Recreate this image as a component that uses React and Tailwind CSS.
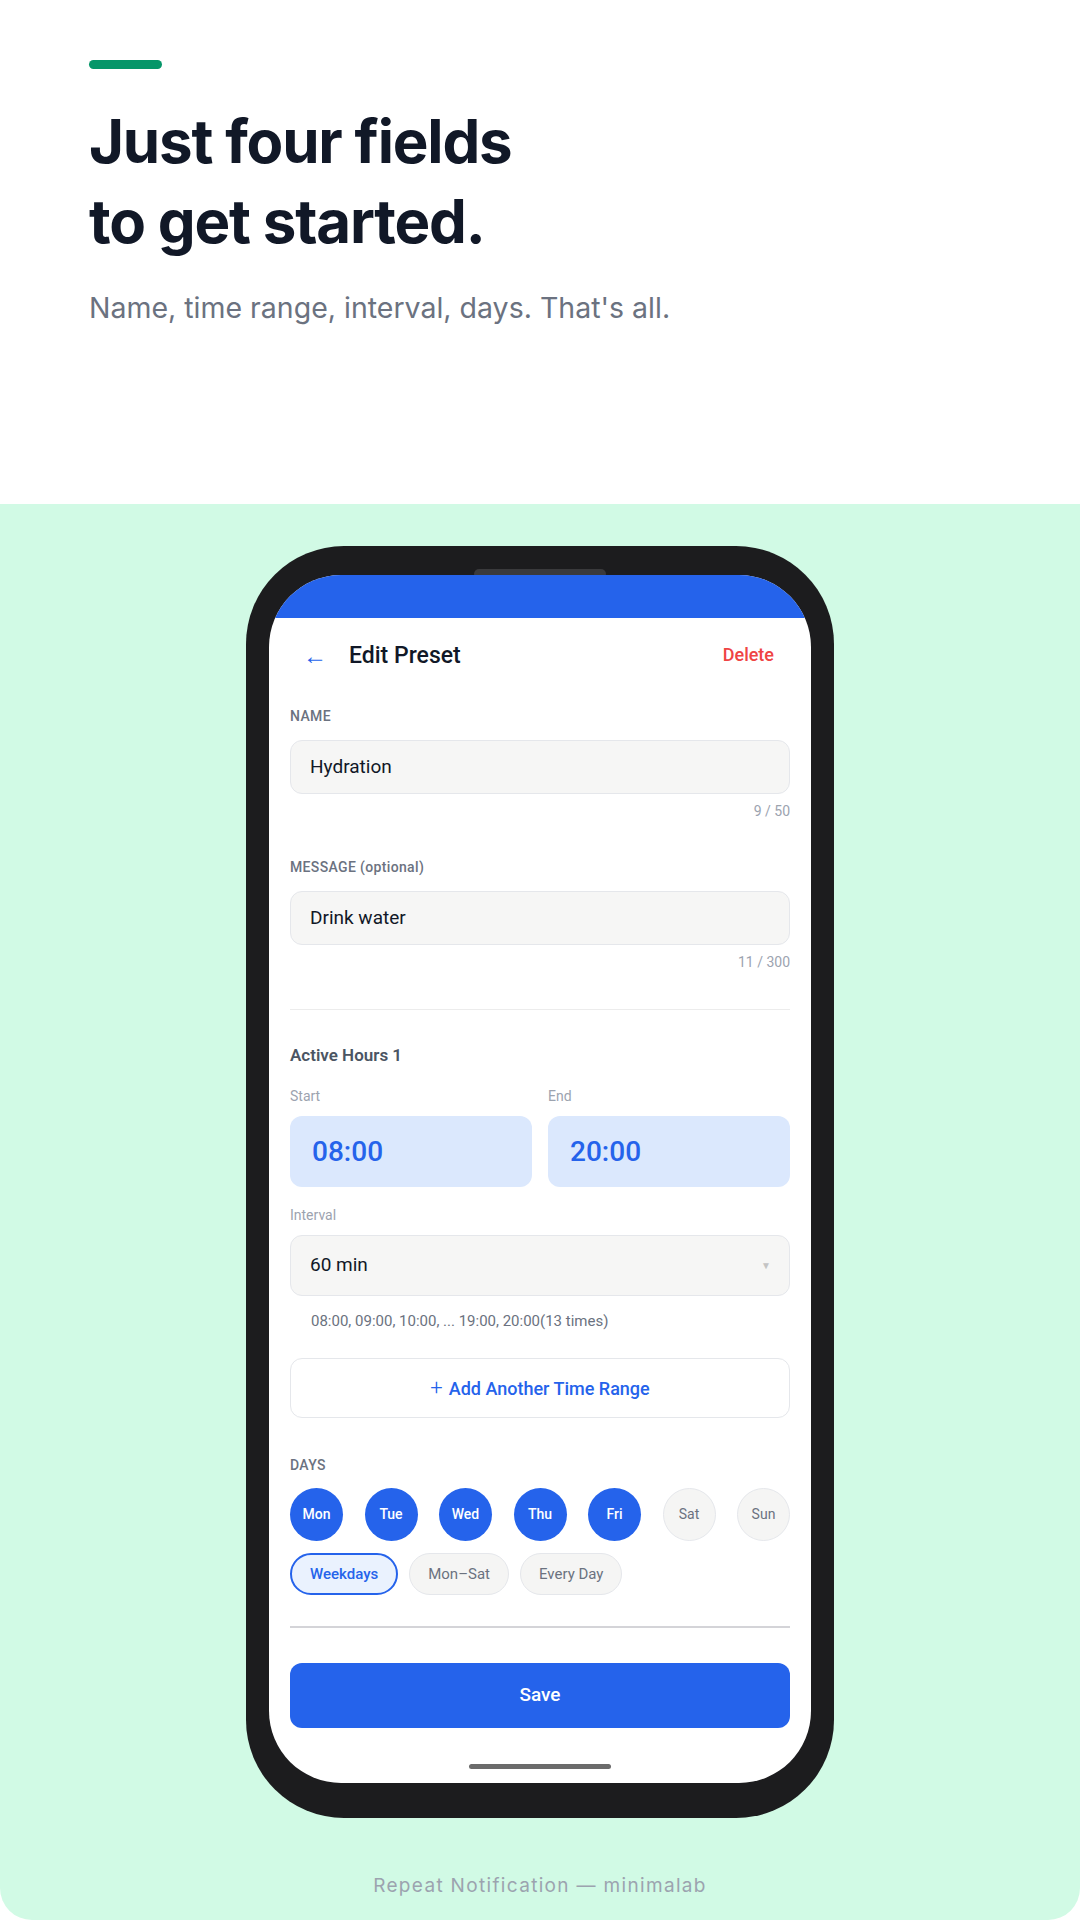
import React from 'react';

const days = [
  { label: 'Mon', on: true },
  { label: 'Tue', on: true },
  { label: 'Wed', on: true },
  { label: 'Thu', on: true },
  { label: 'Fri', on: true },
  { label: 'Sat', on: false },
  { label: 'Sun', on: false },
];

const presets = [
  { label: 'Weekdays', on: true },
  { label: 'Mon–Sat', on: false },
  { label: 'Every Day', on: false },
];

const Label = ({ children, className = '' }) => (
  <div className={`text-[14px] leading-[20px] font-medium tracking-wide text-[#6b7280] ${className}`}>
    {children}
  </div>
);

const Counter = ({ children, className = '' }) => (
  <div className={`text-right text-[14px] leading-[18px] text-[#9ca3af] ${className}`}>{children}</div>
);

const TextField = ({ value, className = '' }) => (
  <div
    className={`h-[54px] rounded-[12px] border border-[#e5e7eb] bg-[#f6f6f5] flex items-center px-[19px] text-[19px] text-[#111827] ${className}`}
  >
    {value}
  </div>
);

const PhoneScreen = () => (
  <div className="h-full bg-white rounded-[72px] overflow-hidden flex flex-col font-['Roboto',sans-serif]">
    {/* Status bar */}
    <div className="h-[43px] bg-[#2563eb] shrink-0" />

    {/* App bar */}
    <div className="h-[76px] flex items-center pl-[34px] pr-[37px] shrink-0">
      <span className="w-[22px] text-[24px] leading-none text-[#2563eb]">←</span>
      <span className="ml-[24px] text-[23px] font-medium text-[#111827]">Edit Preset</span>
      <span className="ml-auto -mt-[3px] text-[18px] font-medium text-[#ef4444]">Delete</span>
    </div>

    {/* Form */}
    <div className="flex flex-col px-[21px]">
      <Label className="mt-[12px]">NAME</Label>
      <TextField value="Hydration" className="mt-[14px]" />
      <Counter className="mt-[8px]">9 / 50</Counter>

      <Label className="mt-[37px]">MESSAGE (optional)</Label>
      <TextField value="Drink water" className="mt-[14px]" />
      <Counter className="mt-[8px]">11 / 300</Counter>

      <div className="mt-[38px] h-px bg-[#ececec]" />

      <div className="mt-[33px] text-[17px] leading-[24px] font-semibold text-[#4b5563]">Active Hours 1</div>

      <div className="mt-[20px] grid grid-cols-2 gap-x-[16px]">
        <div className="text-[14px] leading-[18px] text-[#9ca3af]">Start</div>
        <div className="text-[14px] leading-[18px] text-[#9ca3af]">End</div>
        <div className="mt-[11px] h-[71px] rounded-[12px] bg-[#dbe8fd] flex items-center pl-[22px] text-[28px] font-medium text-[#2563eb]">
          08:00
        </div>
        <div className="mt-[11px] h-[71px] rounded-[12px] bg-[#dbe8fd] flex items-center pl-[22px] text-[28px] font-medium text-[#2563eb]">
          20:00
        </div>
      </div>

      <div className="mt-[19px] text-[14px] leading-[18px] text-[#9ca3af]">Interval</div>
      <div className="mt-[11px] h-[61px] rounded-[12px] border border-[#e5e7eb] bg-[#f6f6f5] flex items-center pl-[19px] pr-[18px] text-[19px] text-[#111827]">
        <span>60 min</span>
        <span className="ml-auto text-[10px] text-[#c4c4c4]">▼</span>
      </div>
      <div className="mt-[15px] pl-[21px] text-[15px] leading-[20px] text-[#6b7280]">
        08:00, 09:00, 10:00, ... 19:00, 20:00(13 times)
      </div>

      <button className="mt-[27px] h-[60px] rounded-[12px] border border-[#e5e7eb] bg-white flex items-center justify-center gap-[6px] text-[18px] font-medium text-[#2563eb]">
        <span className="text-[22px] font-light leading-none">+</span>
        <span>Add Another Time Range</span>
      </button>

      <Label className="mt-[37px]">DAYS</Label>
      <div className="mt-[13px] flex justify-between">
        {days.map((d) => (
          <div
            key={d.label}
            className={
              d.on
                ? 'w-[53px] h-[53px] rounded-full bg-[#2563eb] flex items-center justify-center text-[14px] font-medium text-white'
                : 'w-[53px] h-[53px] rounded-full bg-[#f5f5f4] border border-[#e5e7eb] flex items-center justify-center text-[14px] text-[#6b7280]'
            }
          >
            {d.label}
          </div>
        ))}
      </div>

      <div className="mt-[12px] flex gap-[11px]">
        {presets.map((p) => (
          <div
            key={p.label}
            className={
              p.on
                ? 'h-[42px] px-[18px] rounded-full border-2 border-[#2563eb] bg-[#eaf2fe] flex items-center text-[15px] font-medium text-[#2563eb]'
                : 'h-[42px] px-[18px] rounded-full border border-[#e5e7eb] bg-[#f5f5f4] flex items-center text-[15px] text-[#6b7280]'
            }
          >
            {p.label}
          </div>
        ))}
      </div>

      <div className="mt-[31px] h-[2px] bg-[#d4d4d8]" />

      <button className="mt-[35px] h-[65px] rounded-[12px] bg-[#2563eb] text-white text-[19px] font-medium">
        Save
      </button>

      <div className="mt-[36px] mx-auto w-[142px] h-[5px] rounded-full bg-[#6b6b6b]" />
    </div>
  </div>
);

export default function App() {
  return (
    <div className="w-[1080px] h-[1920px] bg-white flex flex-col font-['Inter',sans-serif]">
      {/* Intro */}
      <header className="h-[504px] shrink-0 px-[89px] pt-[60px]">
        <div className="w-[73px] h-[9px] rounded-full bg-[#059669]" />
        <h1 className="mt-[32px] text-[60px] leading-[80px] font-bold tracking-[-0.02em] text-[#111827]">
          Just four fields
          <br />
          to get started.
        </h1>
        <p className="mt-[28px] text-[28.5px] leading-[38px] text-[#6b7280]">
          Name, time range, interval, days. That's all.
        </p>
      </header>

      {/* Showcase */}
      <section className="flex-1 bg-[#d1fae5] rounded-b-[32px] flex flex-col items-center pt-[42px]">
        <div className="relative w-[588px] h-[1272px] rounded-[98px] bg-[#1c1c1e] pt-[29px] pb-[35px] px-[23px]">
          <div className="absolute top-[23px] left-1/2 -translate-x-1/2 w-[132px] h-[10px] rounded-[6px] bg-[#3a3a3c]" />
          <div className="relative h-full">
            <PhoneScreen />
          </div>
        </div>
        <div className="mt-[55px] text-[19px] leading-[26px] tracking-[0.07em] text-[#9ca3af]">
          Repeat Notification — minimalab
        </div>
      </section>
    </div>
  );
}
